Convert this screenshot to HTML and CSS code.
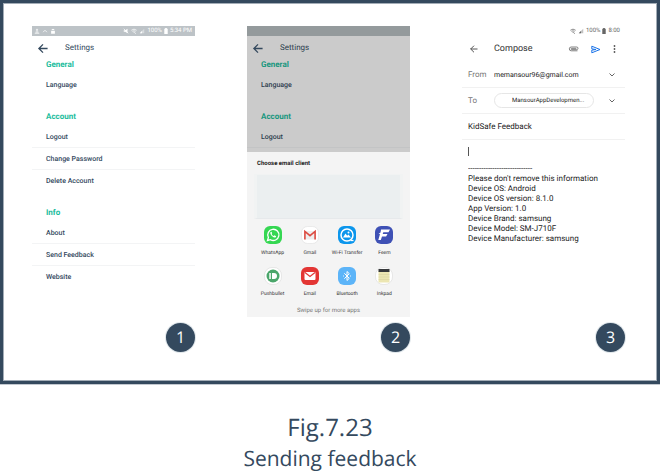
FILE: index.html
```html
<!DOCTYPE html>
<html lang="en">
<head>
<meta charset="utf-8">
<meta name="viewport" content="width=device-width, initial-scale=1">
<title>Sending feedback</title>
<link rel="stylesheet" href="styles.css">
</head>
<body>
<figure class="figure">
  <div class="frame">
    <section class="step">
      <div class="phone">
        <div class="status">
          <span class="status-group">
            <svg class="glyph" viewBox="0 0 8 8"><path d="M4 1v4M2.500 2.500h3M1 7h6M2 5.500h4" /></svg>
            <svg class="glyph" viewBox="0 0 8 8"><path d="M1.500 5.500L4 3l2.500 2.500" /></svg>
            <svg class="glyph" viewBox="0 0 8 8"><path class="solid" d="M1.500 3q2.500-4 5 0zM1.500 4h5v3.500h-5z" /></svg>
          </span>
          <span class="status-group">
            <svg class="glyph" viewBox="0 0 8 8"><path class="solid" d="M1 3h2l3-2v6L3 5H1z" /><path d="M1 1l6 6" /></svg>
            <svg class="glyph" viewBox="0 0 8 8"><path d="M.5 3q3.500-3 7 0M2 4.500q2-1.500 4 0M3.500 6h1l2 1.500" /></svg>
            <svg class="glyph" viewBox="0 0 8 8"><path class="faint" d="M1 7h6V1z" /><path class="solid" d="M1 7h3V4z" /></svg>
            <span>100%</span>
            <svg class="battery" viewBox="0 0 4 7"><path d="M0 1h1V0h2v1h1v6H0z" /></svg>
            <span>5:34 PM</span>
          </span>
        </div>
        <header class="toolbar">
          <button class="icon-button" aria-label="Back"><svg class="arrow" viewBox="0 0 12 12"><path d="M11 6H1.500M6 1.500L1.500 6 6 10.500" /></svg></button>
          <h2 class="toolbar-title">Settings</h2>
        </header>
        <div class="group"><h3 class="group-title">General</h3><button class="row">Language</button></div>
        <div class="group"><h3 class="group-title">Account</h3><button class="row">Logout</button><button class="row">Change Password</button><button class="row">Delete Account</button></div>
        <div class="group"><h3 class="group-title">Info</h3><button class="row">About</button><button class="row">Send Feedback</button><button class="row">Website</button></div>
      </div>
      <span class="badge">1</span>
    </section>

    <section class="step">
      <div class="phone">
        <div class="dimmed">
          <div class="status"></div>
          <header class="toolbar">
            <button class="icon-button" aria-label="Back"><svg class="arrow" viewBox="0 0 12 12"><path d="M11 6H1.500M6 1.500L1.500 6 6 10.500" /></svg></button>
            <h2 class="toolbar-title">Settings</h2>
          </header>
          <div class="group"><h3 class="group-title">General</h3><button class="row">Language</button></div>
          <div class="group"><h3 class="group-title">Account</h3><button class="row">Logout</button><div class="row-line"></div></div>
        </div>
        <div class="sheet">
          <h3 class="sheet-title">Choose email client</h3>
          <div class="preview"></div>
          <div class="apps">
            <button class="app">
              <svg class="app-icon" viewBox="0 0 18 18"><rect width="18" height="18" rx="6" fill="#35d752"/><path d="M3.500 14.500l.9-3A5.600 5.600 0 1 1 6.500 13.700z" fill="none" stroke="#fff" stroke-width="1.300"/><path d="M6.600 6c-.9 1 .2 3 1.600 4.300s3 1.700 3.700.7l.2-.8-1.600-.9-.9.8c-1-.4-1.700-1.100-2-2l.6-.8-.7-1.500z" fill="#fff"/></svg>
              <span>WhatsApp</span>
            </button>
            <button class="app">
              <svg class="app-icon" viewBox="0 0 18 18"><rect x=".5" y=".5" width="17" height="17" rx="6" fill="#fff" stroke="#e2e2e2" stroke-width=".7"/><path d="M3.500 5h11v8.500h-11z" fill="#eee"/><path d="M3.900 13.500V5.500L9 9.600l5.100-4.100v8" fill="none" stroke="#dc4b41" stroke-width="1.600"/></svg>
              <span>Gmail</span>
            </button>
            <button class="app">
              <svg class="app-icon" viewBox="0 0 18 18"><rect width="18" height="18" rx="6" fill="#0c96ec"/><circle cx="9" cy="9" r="6" fill="none" stroke="#fff" stroke-width="1.500"/><path d="M12.500 14.500h3" stroke="#fff" stroke-width="1.300"/><path d="M5 11.500l2.500-4 1.700 2.300 1.200-1.300 2.600 3z" fill="#fff"/><circle cx="10.500" cy="6.500" r="1" fill="#fff"/></svg>
              <span>Wi-Fi Transfer</span>
            </button>
            <button class="app">
              <svg class="app-icon" viewBox="0 0 18 18"><rect width="18" height="18" rx="6" fill="#3f51b5"/><path d="M6 3.500h9l-1.500 2.700H8.300L7.700 8h4.800l-1.400 2.500H7L5.800 14H3.300L5 8H3.500l2-1.500z" fill="#fff"/></svg>
              <span>Feem</span>
            </button>
            <button class="app">
              <svg class="app-icon" viewBox="0 0 18 18"><rect x=".5" y=".5" width="17" height="17" rx="7.500" fill="#fff" stroke="#dedede" stroke-width=".7"/><circle cx="9" cy="9" r="6.500" fill="#4ba66b"/><path d="M5.300 6h1.500v6H5.300zM8 6h2a3 3 0 0 1 0 6H8z" fill="#fff"/></svg>
              <span>Pushbullet</span>
            </button>
            <button class="app">
              <svg class="app-icon" viewBox="0 0 18 18"><rect width="18" height="18" rx="6" fill="#e33634"/><rect x="3.500" y="5" width="11" height="8" rx="1" fill="#fff"/><path d="M4 5.500l5 4 5-4" fill="none" stroke="#e33634" stroke-width="1.200"/></svg>
              <span>Email</span>
            </button>
            <button class="app">
              <svg class="app-icon" viewBox="0 0 18 18"><rect width="18" height="18" rx="6" fill="#5cb4f8"/><path d="M6.300 6.300l5 5L9 13.500v-9l2.300 2.200-5 5" fill="none" stroke="#fff" stroke-width="1"/><path d="M5 9h.9M12 9h.9" stroke="#fff"/></svg>
              <span>Bluetooth</span>
            </button>
            <button class="app">
              <svg class="app-icon" viewBox="0 0 18 18"><rect x=".5" y=".5" width="17" height="17" rx="7.500" fill="#fff" stroke="#dedede" stroke-width=".7"/><path d="M3.500 4h11v11.500h-11z" fill="#ece6b2"/><path d="M3.500 7.500h11M3.500 10h11M3.500 12.500h11" stroke="#d6d09c" stroke-width=".5"/><path d="M3.500 2h11v3h-11z" fill="#37393b"/></svg>
              <span>Inkpad</span>
            </button>
          </div>
          <p class="hint">Swipe up for more apps</p>
        </div>
      </div>
      <span class="badge">2</span>
    </section>

    <section class="step">
      <div class="phone">
        <div class="status status-light">
          <span class="status-group">
            <svg class="glyph" viewBox="0 0 8 8"><path d="M.5 3q3.500-3 7 0M2 4.500q2-1.500 4 0M3.500 6h1l2 1.500" /></svg>
            <svg class="glyph" viewBox="0 0 8 8"><path class="faint" d="M1 7h6V1z" /><path class="solid" d="M1 7h3V4z" /></svg>
            <span>100%</span>
            <svg class="battery" viewBox="0 0 4 7"><path d="M0 1h1V0h2v1h1v6H0z" /></svg>
            <span>8:00</span>
          </span>
        </div>
        <header class="compose-bar">
          <button class="icon-button" aria-label="Back"><svg class="compose-back" viewBox="0 0 8 8"><path d="M7.500 4h-7M4 .7L.7 4 4 7.300" /></svg></button>
          <h2 class="compose-title">Compose</h2>
          <span class="compose-actions">
            <button class="icon-button" aria-label="Attach"><svg class="clip" viewBox="0 0 11 8"><path d="M9.500 5.800H3.200a1.900 1.900 0 0 1 0-3.800h5.500a1.300 1.300 0 0 1 0 2.600H3.500a.5.500 0 0 1 0-1.200h4.800" /></svg></button>
            <button class="icon-button" aria-label="Send"><svg class="send" viewBox="0 0 10 8"><path d="M.8.7L9 4 .8 7.300V4.600L5 4 .8 3.400z" /></svg></button>
            <button class="icon-button" aria-label="More"><svg class="dots" viewBox="0 0 2 8"><circle cx="1" cy="1" r=".9"/><circle cx="1" cy="4" r=".9"/><circle cx="1" cy="7" r=".9"/></svg></button>
          </span>
        </header>
        <div class="field">
          <label class="field-label" for="from">From</label>
          <input class="field-input address" id="from" type="email" value="memansour96@gmail.com">
          <button class="icon-button" aria-label="Choose account"><svg class="chevron" viewBox="0 0 6 4"><path d="M.5.5L3 3 5.500.5" /></svg></button>
        </div>
        <div class="field">
          <span class="field-label">To</span>
          <button class="chip">MansourAppDevelopmen...</button>
          <button class="icon-button" aria-label="Show Cc and Bcc"><svg class="chevron" viewBox="0 0 6 4"><path d="M.5.5L3 3 5.500.5" /></svg></button>
        </div>
        <div class="field">
          <input class="field-input" type="text" aria-label="Subject" value="KidSafe Feedback">
        </div>
        <div class="message">
          <div class="caret"></div>
          <textarea class="message-text" aria-label="Message" rows="8">-----------------------------
Please don't remove this information
Device OS: Android
Device OS version: 8.1.0
App Version: 1.0
Device Brand: samsung
Device Model: SM-J710F
Device Manufacturer: samsung</textarea>
        </div>
      </div>
      <span class="badge">3</span>
    </section>
  </div>
  <figcaption class="caption">
    <div class="caption-number">Fig.7.23</div>
    <div class="caption-text">Sending feedback</div>
  </figcaption>
</figure>
</body>
</html>
```
FILE: styles.css
```css
* {
  box-sizing: border-box;
}

body {
  margin: 0;
  background: #fff;
  color: #34495e;
  font-family: Roboto, "Liberation Sans", sans-serif;
  text-rendering: geometricPrecision;
}

h2, h3, p, figure {
  margin: 0;
}

svg {
  display: block;
  flex: none;
}

button, input, textarea {
  margin: 0;
  padding: 0;
  border: 0;
  background: none;
  color: inherit;
  font: inherit;
  text-rendering: inherit;
}

.frame {
  display: grid;
  grid-template-columns: repeat(3, minmax(0, 1fr));
  gap: 52px;
  padding: 23px 32px 29px 29px;
  border: 3px solid #34495e;
  box-shadow: inset 0 0 0 1px #a3adb7, 0 1px 0 #c3c9d0;
}

.step {
  display: flex;
  flex-direction: column;
}

.phone {
  flex: 1;
}

.badge {
  align-self: flex-end;
  width: 29px;
  height: 29px;
  margin-top: 6px;
  border-radius: 50%;
  background: #34495e;
  box-shadow: 0 0 0 1px #dfe6ea;
  color: #fff;
  font: 16px/28px "Open Sans", sans-serif;
  text-align: center;
}

/* Status bar */
.status {
  display: flex;
  justify-content: space-between;
  height: 10px;
  padding: 0 3px 0 2px;
  background: #bdc3c7;
  color: #fff;
  font-size: 6px;
  line-height: 10px;
}

.status-light {
  justify-content: flex-end;
  padding-right: 5px;
  background: none;
  color: #666;
}

.status-group {
  display: flex;
  align-items: center;
  gap: 2px;
}

.glyph {
  width: 6px;
  height: 6px;
  fill: none;
  stroke: currentColor;
}

.glyph .solid {
  fill: currentColor;
  stroke: none;
}

.glyph .faint {
  fill: currentColor;
  stroke: none;
  opacity: .4;
}

.battery {
  width: 4px;
  height: 6px;
  fill: currentColor;
}

/* Settings screen */
.toolbar {
  display: flex;
  align-items: center;
  gap: 16px;
  height: 24px;
  padding-left: 5px;
}

.arrow {
  width: 12px;
  height: 11px;
  fill: none;
  stroke: #34495e;
  stroke-width: 1.400;
}

.toolbar-title {
  font-size: 8px;
  font-weight: 400;
  line-height: 10px;
}

.group + .group {
  margin-top: 16px;
}

.group-title {
  margin-bottom: 4px;
  padding-left: 14px;
  color: #1abc9c;
  font-size: 8px;
  font-weight: 700;
  line-height: 10px;
}

.row {
  display: block;
  width: 100%;
  height: 22px;
  padding-left: 14px;
  border-bottom: 1px solid transparent;
  font-size: 7px;
  font-weight: 500;
  line-height: 10px;
  text-align: left;
}

.row:not(:last-child) {
  border-bottom-color: #f3f4f5;
}

.dimmed {
  padding-bottom: 4px;
  background: #cbcbcb;
}

.dimmed .status {
  background: #949a9c;
}

.dimmed .group-title {
  color: #16967d;
}

.dimmed .row,
.dimmed .toolbar {
  color: #2d3d4e;
}

.dimmed .row:not(:last-child) {
  border-bottom-color: #c3c4c5;
}

/* App chooser */
.sheet {
  padding: 7px 7px 1px;
  background: #f4f4f4;
}

.sheet-title {
  padding-left: 3px;
  color: #222;
  font-size: 6px;
  font-weight: 700;
  line-height: 10px;
}

.preview {
  height: 45px;
  margin: 5px 0 7px;
  border: solid #f1f3f3;
  border-width: 1px 3px;
  border-bottom-color: #e6e9eb;
  background: #ebeff0;
}

.apps {
  display: grid;
  grid-template-columns: repeat(4, 1fr);
  row-gap: 10px;
}

.app {
  display: flex;
  flex-direction: column;
  align-items: center;
  gap: 5px;
  color: #333;
  font-size: 5px;
  line-height: 8px;
  white-space: nowrap;
}

.app-icon {
  width: 18px;
  height: 18px;
}

.hint {
  margin-top: 8px;
  color: #777;
  font-size: 6px;
  line-height: 10px;
  text-align: center;
}

/* Compose screen */
.compose-bar {
  display: flex;
  align-items: center;
  height: 26px;
  padding: 0 9px 0 8px;
}

.compose-back {
  width: 8px;
  height: 8px;
  fill: none;
  stroke: #555;
}

.compose-title {
  margin-left: 16px;
  color: #333;
  font-size: 9px;
  font-weight: 400;
  line-height: 12px;
}

.compose-actions {
  display: flex;
  align-items: center;
  gap: 12px;
  margin-left: auto;
}

.clip {
  width: 11px;
  height: 8px;
  fill: none;
  stroke: #666;
  stroke-width: .8;
}

.send {
  width: 10px;
  height: 9px;
  fill: none;
  stroke: #1a73e8;
}

.dots {
  width: 3px;
  height: 8px;
  fill: #555;
}

.field {
  display: flex;
  align-items: center;
  height: 26px;
  padding: 0 10px 0 6px;
  border-bottom: 1px solid #f1f1f1;
  color: #222;
  font-size: 8px;
  line-height: 10px;
}

.field-label {
  flex: none;
  width: 26px;
  color: #777;
}

.field-input {
  flex: 1;
  min-width: 0;
  height: 12px;
}

.address {
  font-size: 7px;
}

.chip {
  width: 100px;
  height: 15px;
  margin-right: auto;
  padding-left: 17px;
  border: 1px solid #e6e6e6;
  border-radius: 8px;
  font-size: 6px;
  text-align: left;
  white-space: nowrap;
}

.chevron {
  width: 6px;
  height: 4px;
  fill: none;
  stroke: #666;
}

.message {
  padding: 7px 6px 0;
}

.caret {
  width: 1px;
  height: 9px;
  margin-bottom: 8px;
  background: #555;
}

.message-text {
  display: block;
  width: 100%;
  height: 80px;
  overflow: hidden;
  resize: none;
  color: #222;
  font-size: 8px;
  line-height: 10px;
}

/* Caption */
.caption {
  margin-top: 26px;
  font-family: "Open Sans", sans-serif;
  text-align: center;
}

.caption-number {
  font-size: 24px;
  line-height: 36px;
}

.caption-text {
  font-size: 21px;
  line-height: 27px;
}
```
